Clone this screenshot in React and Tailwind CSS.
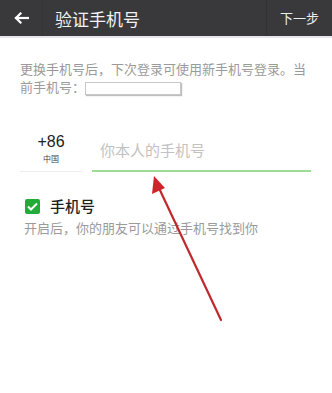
export default function App() {
  const font = { fontFamily: '"Noto Sans CJK SC", "Noto Sans", sans-serif' };

  return (
    <div className="relative w-[332px] h-[393px] bg-white overflow-hidden" style={font}>
      {/* Header */}
      <div className="flex items-center h-[36px] bg-[#39393b] text-white">
        <div className="w-[43px] h-full flex items-center justify-center border-r border-[#343436]">
          <svg width="15" height="12" viewBox="0 0 15 12" fill="none" stroke="#ffffff" strokeWidth="2.2" strokeLinecap="square">
            <path d="M14 6H2" />
            <path d="M6.5 1.5L2 6l4.5 4.5" />
          </svg>
        </div>
        <div className="flex-1 pl-[12px] text-[17px] leading-none text-[#f2f2f2]">验证手机号</div>
        <div className="h-full w-[66px] flex items-center justify-center border-l border-[#333335] text-[13px] text-[#ececec]">
          下一步
        </div>
      </div>
      <div className="h-[2px] bg-[#e6e6ea]" />

      {/* Notice */}
      <div className="px-[20px] pt-[22px] text-[13px] leading-[18px] text-[#9a9a9a]">
        更换手机号后，下次登录可使用新手机号登录。当
        <br />
        前手机号：
        <span className="inline-block align-middle w-[96px] h-[13px] bg-white border border-[#c8c8c8] shadow-[1px_1px_1px_rgba(0,0,0,0.25)]" />
      </div>

      {/* Phone input */}
      <div className="flex items-end pl-[20px] pr-[21px] mt-[37px]">
        <div className="w-[62px] flex flex-col items-center border-b border-[#eeeeee] pb-[7px]">
          <span className="text-[16px] leading-[18px] font-medium text-[#222]" style={{ fontFamily: '"Liberation Sans", Arial, sans-serif' }}>+86</span>
          <span className="text-[8px] leading-[10px] mt-[3px] text-[#444]">中国</span>
        </div>
        <div className="flex-1 ml-[10px] border-b-2 border-[#9edb95] pb-[11px] pl-[8px] text-[15px] leading-[18px] text-[#c2c2c2]">
          你本人的手机号
        </div>
      </div>

      {/* Checkbox row */}
      <div className="pl-[25px] mt-[25px] flex items-center gap-[10px]">
        <div className="w-[15px] h-[15px] rounded-[2px] bg-[#22ab38] flex items-center justify-center">
          <svg width="11" height="9" viewBox="0 0 11 9" fill="none" stroke="#ffffff" strokeWidth="2">
            <path d="M1 4.5L4 7.5L10 1.5" />
          </svg>
        </div>
        <span className="text-[15px] leading-[18px] font-medium text-[#1e1e1e]">手机号</span>
      </div>
      <div className="pl-[24px] mt-[4px] text-[13px] leading-[18px] text-[#9a9a9a]">
        开启后，你的朋友可以通过手机号找到你
      </div>

      {/* Annotation arrow */}
      <svg className="absolute left-0 top-0 pointer-events-none" width="332" height="393" viewBox="0 0 332 393">
        <line x1="221" y1="320" x2="158" y2="186" stroke="#c0282d" strokeWidth="2.2" strokeLinecap="round" />
        <polygon points="154,176 152,194 165,188" fill="#d0242b" />
      </svg>
    </div>
  );
}
